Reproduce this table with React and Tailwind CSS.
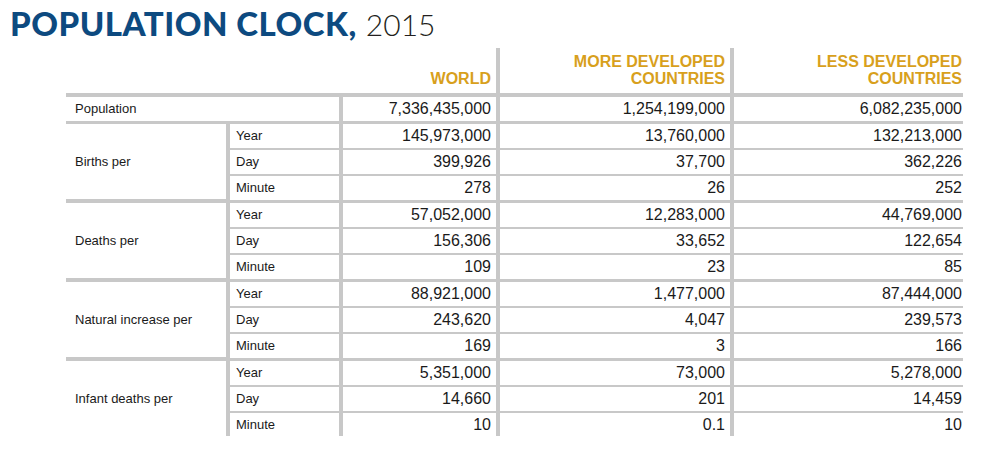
import React from "react";

const groups = [
  {
    label: "Births per",
    rows: [
      ["Year", "145,973,000", "13,760,000", "132,213,000"],
      ["Day", "399,926", "37,700", "362,226"],
      ["Minute", "278", "26", "252"],
    ],
  },
  {
    label: "Deaths per",
    rows: [
      ["Year", "57,052,000", "12,283,000", "44,769,000"],
      ["Day", "156,306", "33,652", "122,654"],
      ["Minute", "109", "23", "85"],
    ],
  },
  {
    label: "Natural increase per",
    rows: [
      ["Year", "88,921,000", "1,477,000", "87,444,000"],
      ["Day", "243,620", "4,047", "239,573"],
      ["Minute", "169", "3", "166"],
    ],
  },
  {
    label: "Infant deaths per",
    rows: [
      ["Year", "5,351,000", "73,000", "5,278,000"],
      ["Day", "14,660", "201", "14,459"],
      ["Minute", "10", "0.1", "10"],
    ],
  },
];

const Num = ({ children, last }) => (
  <div
    className={
      "bg-white flex items-center justify-end text-[16px] text-[#1a1a1a] " +
      (last ? "pr-[1px]" : "pr-[5px]")
    }
  >
    {children}
  </div>
);

const Head = ({ children, last }) => (
  <div
    className={
      "bg-white flex items-end justify-end pb-[6px] text-[16px] font-bold text-[#d8a01c] leading-[17px] text-right " +
      (last ? "pr-[1px]" : "pr-[5px]")
    }
  >
    <div>{children}</div>
  </div>
);

export default function App() {
  return (
    <div
      className="w-[988px] h-[459px] bg-white overflow-hidden"
      style={{ fontFamily: "'Liberation Sans', Arial, sans-serif" }}
    >
      {/* title */}
      <div
        className="h-[48px] pl-[10px] pt-[3px] leading-[40px] whitespace-nowrap"
        style={{ fontFamily: "Lato, 'Noto Sans', sans-serif" }}
      >
        <span className="text-[33px] font-black text-[#0d4a80] tracking-[0.5px]">
          POPULATION CLOCK,
        </span>
        <span className="ml-[9px] text-[30px] font-light text-[#231f20]">
          2015
        </span>
      </div>

      {/* table */}
      <div className="ml-[66px] w-[897px] bg-[#c8c8c8] flex flex-col gap-[4px]">
        <div className="grid grid-cols-[430px_230px_229px] gap-x-[4px] h-[45px]">
          <Head>WORLD</Head>
          <Head>
            MORE DEVELOPED
            <br />
            COUNTRIES
          </Head>
          <Head last>
            LESS DEVELOPED
            <br />
            COUNTRIES
          </Head>
        </div>

        <div className="grid grid-cols-[273px_153px_230px_229px] gap-x-[4px] h-[23px]">
          <div className="bg-white flex items-center pl-[9px] text-[13px] text-[#1a1a1a]">
            Population
          </div>
          <Num>7,336,435,000</Num>
          <Num>1,254,199,000</Num>
          <Num last>6,082,235,000</Num>
        </div>

        {groups.map((g) => (
          <div key={g.label} className="flex gap-x-[4px]">
            <div className="w-[160px] bg-white flex items-center pl-[9px] text-[13px] text-[#1a1a1a]">
              {g.label}
            </div>
            <div className="flex-1 flex flex-col gap-y-[3px]">
              {g.rows.map((r) => (
                <div
                  key={r[0]}
                  className="grid grid-cols-[109px_153px_230px_229px] gap-x-[4px] h-[23px]"
                >
                  <div className="bg-white flex items-center pl-[6px] text-[13px] text-[#1a1a1a]">
                    {r[0]}
                  </div>
                  <Num>{r[1]}</Num>
                  <Num>{r[2]}</Num>
                  <Num last>{r[3]}</Num>
                </div>
              ))}
            </div>
          </div>
        ))}
      </div>
    </div>
  );
}
